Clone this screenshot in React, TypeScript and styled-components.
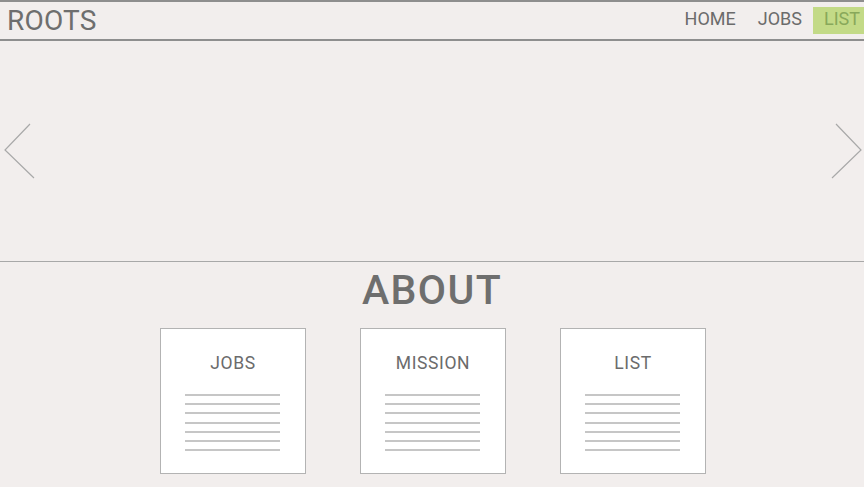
import React from 'react';
import styled, { createGlobalStyle } from 'styled-components';

const GlobalStyle = createGlobalStyle`
  html, body {
    margin: 0;
    padding: 0;
    background: #f2eeed;
    overflow-x: hidden;
  }
  body {
    font-family: Roboto, 'Liberation Sans', sans-serif;
  }
`;

const Header = styled.header`
  display: flex;
  align-items: center;
  justify-content: space-between;
  height: 37px;
  border-top: 2px solid #8e8e8e;
  border-bottom: 2px solid #8e8e8e;
`;

const Logo = styled.div`
  padding-left: 7px;
  font-size: 28px;
  line-height: 37px;
  color: #6e6e6e;
  letter-spacing: 0.2px;
`;

const Nav = styled.nav`
  display: flex;
  align-items: center;
  margin-right: -7px;
`;

const NavItem = styled.a<{ $active?: boolean }>`
  display: block;
  height: 27px;
  box-sizing: border-box;
  padding: 0 11px 3px;
  font-size: 18px;
  line-height: 24px;
  color: ${(p) => (p.$active ? '#88a85a' : '#6b6b6b')};
  background: ${(p) => (p.$active ? '#c3da87' : 'transparent')};
  text-decoration: none;
`;

const Hero = styled.section`
  display: flex;
  align-items: center;
  justify-content: space-between;
  height: 220px;
  padding: 0 2px 0 4px;
  border-bottom: 1px solid #a8a8a8;
`;

const Arrow = styled.svg`
  display: block;
  width: 32px;
  height: 58px;
  stroke: #a9a9a9;
  stroke-width: 1.2;
  fill: none;
`;

const About = styled.section`
  display: flex;
  flex-direction: column;
  align-items: center;
  padding-top: 8px;
`;

const Title = styled.h1`
  margin: 0 0 17px;
  font-size: 41px;
  line-height: 41px;
  font-weight: 500;
  letter-spacing: 1.4px;
  color: #6e6e6e;
`;

const Cards = styled.div`
  display: flex;
  gap: 54px;
  padding-left: 2px;
`;

const Card = styled.div`
  width: 146px;
  height: 146px;
  box-sizing: border-box;
  border: 1px solid #b3b3b3;
  background: #ffffff;
  padding-top: 24px;
  display: flex;
  flex-direction: column;
  align-items: center;
`;

const CardTitle = styled.h2`
  margin: 0 0 21px;
  font-size: 17.5px;
  line-height: 20px;
  font-weight: 400;
  color: #6b6b6b;
  letter-spacing: 0.6px;
`;

const Lines = styled.div`
  display: flex;
  flex-direction: column;
  gap: 7.2px;
  width: 95px;
  margin-left: -2px;
`;

const Line = styled.span`
  display: block;
  height: 2px;
  background: #c6c6c6;
`;

const cards = ['JOBS', 'MISSION', 'LIST'];

export default function App() {
  return (
    <>
      <GlobalStyle />
      <Header>
        <Logo>ROOTS</Logo>
        <Nav>
          <NavItem href="#">HOME</NavItem>
          <NavItem href="#">JOBS</NavItem>
          <NavItem href="#" $active>
            LIST
          </NavItem>
        </Nav>
      </Header>
      <Hero>
        <Arrow viewBox="0 0 32 58">
          <polyline points="26,2 1,28 30,56" />
        </Arrow>
        <Arrow viewBox="0 0 32 58">
          <polyline points="6,2 31,28 2,56" />
        </Arrow>
      </Hero>
      <About>
        <Title>ABOUT</Title>
        <Cards>
          {cards.map((c) => (
            <Card key={c}>
              <CardTitle>{c}</CardTitle>
              <Lines>
                {Array.from({ length: 7 }).map((_, i) => (
                  <Line key={i} />
                ))}
              </Lines>
            </Card>
          ))}
        </Cards>
      </About>
    </>
  );
}
